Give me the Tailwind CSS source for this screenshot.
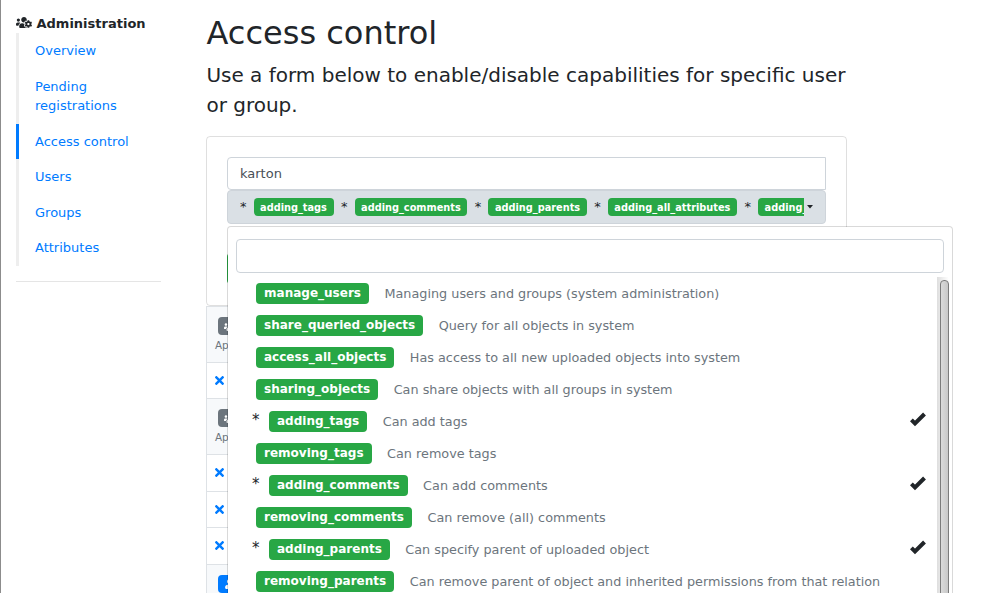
<!DOCTYPE html>
<html lang="en">
<head>
<meta charset="utf-8">
<title>Access control</title>
<script src="https://cdn.jsdelivr.net/npm/@tailwindcss/browser@4"></script>
</head>
<body class="relative flex h-[593px] w-[986px] overflow-hidden border-l border-[#8c8c8c] bg-white font-['DejaVu_Sans',sans-serif] text-[13px] leading-[19.5px] text-[#212529]">
<svg class="hidden">
  <symbol id="times" viewBox="0 0 352 512"><path fill="currentColor" d="M242.72 256l100.07-100.07c12.28-12.28 12.28-32.19 0-44.48l-22.24-22.24c-12.28-12.28-32.19-12.28-44.48 0L176 189.28 75.93 89.21c-12.28-12.28-32.19-12.28-44.48 0L9.21 111.45c-12.28 12.28-12.28 32.19 0 44.48L109.28 256 9.21 356.07c-12.28 12.28-12.28 32.19 0 44.48l22.24 22.24c12.28 12.28 32.2 12.28 44.48 0L176 322.72l100.07 100.07c12.28 12.28 32.2 12.28 44.48 0l22.24-22.24c12.28-12.28 12.28-32.19 0-44.48L242.72 256z"/></symbol>
  <symbol id="check" viewBox="0 0 16 16"><path fill="none" stroke="currentColor" stroke-width="4" d="M1.400 8.900L5 12.500L14.500 3"/></symbol>
  <symbol id="user" viewBox="0 0 448 512"><path fill="currentColor" d="M224 256c70.700 0 128-57.300 128-128S294.700 0 224 0 96 57.300 96 128s57.300 128 128 128zm89.600 32h-16.700c-22.200 10.200-46.900 16-72.900 16s-50.600-5.800-72.900-16h-16.700C60.200 288 0 348.200 0 422.400V464c0 26.500 21.500 48 48 48h352c26.500 0 48-21.500 48-48v-41.600c0-74.200-60.200-134.400-134.400-134.400z"/></symbol>
  <symbol id="users" viewBox="0 0 640 512"><path fill="currentColor" d="M96 224c35.300 0 64-28.700 64-64s-28.700-64-64-64-64 28.700-64 64 28.700 64 64 64zm448 0c35.300 0 64-28.700 64-64s-28.700-64-64-64-64 28.700-64 64 28.700 64 64 64zm32 32h-64c-17.600 0-33.500 7.100-45.100 18.600 40.300 22.100 68.900 62 75.100 109.400h66c17.700 0 32-14.300 32-32v-32c0-35.300-28.700-64-64-64zm-256 0c61.900 0 112-50.100 112-112S381.900 32 320 32 208 82.100 208 144s50.100 112 112 112zm76.800 32h-8.300c-20.800 10-43.900 16-68.500 16s-47.600-6-68.500-16h-8.300C179.600 288 128 339.600 128 403.200V432c0 26.500 21.500 48 48 48h288c26.500 0 48-21.500 48-48v-28.800c0-63.600-51.600-115.200-115.200-115.200zm-223.700-13.400C161.500 263.100 145.600 256 128 256H64c-35.300 0-64 28.700-64 64v32c0 17.700 14.300 32 32 32h65.900c6.300-47.400 34.900-87.300 75.200-109.400z"/></symbol>
</svg>

<aside class="ml-[15px] w-[145px] shrink-0 pt-[13.5px]">
  <div class="flex h-[19.500px] items-center gap-[4.500px] font-bold">
    <svg class="-mt-px h-[13px] w-[16px]" viewBox="0 0 640 512"><path fill="currentColor" d="M610.5 341.3c2.600-14.100 2.600-28.500 0-42.600l25.800-14.900c3-1.700 4.300-5.200 3.300-8.500-6.700-21.600-18.200-41.200-33.200-57.400-2.300-2.500-6-3.100-9-1.400l-25.800 14.900c-10.900-9.300-23.400-16.500-36.900-21.300v-29.800c0-3.400-2.400-6.400-5.700-7.100-22.300-5-45-4.800-66.200 0-3.300.7-5.700 3.700-5.700 7.100v29.800c-13.500 4.800-26 12-36.900 21.300l-25.800-14.900c-2.900-1.700-6.700-1.100-9 1.400-15 16.200-26.500 35.800-33.200 57.400-1 3.300.4 6.800 3.300 8.500l25.800 14.900c-2.600 14.100-2.600 28.500 0 42.600l-25.800 14.900c-3 1.700-4.300 5.200-3.300 8.500 6.700 21.600 18.200 41.100 33.200 57.400 2.300 2.500 6 3.100 9 1.400l25.800-14.900c10.900 9.300 23.400 16.500 36.900 21.300v29.800c0 3.400 2.400 6.400 5.700 7.100 22.300 5 45 4.800 66.200 0 3.300-.7 5.700-3.700 5.700-7.100v-29.800c13.500-4.800 26-12 36.900-21.300l25.800 14.900c2.900 1.700 6.700 1.100 9-1.400 15-16.200 26.500-35.800 33.200-57.400 1-3.300-.4-6.800-3.300-8.500l-25.800-14.900zM496 368.500c-26.800 0-48.500-21.800-48.500-48.500s21.800-48.500 48.500-48.500 48.500 21.800 48.500 48.500-21.700 48.500-48.500 48.500zM96 224c35.300 0 64-28.700 64-64s-28.700-64-64-64-64 28.700-64 64 28.700 64 64 64zm224 32c1.900 0 3.700-.5 5.600-.6 8.300-21.700 20.500-42.100 36.300-59.200 7.400-8 17.900-12.600 28.900-12.600 6.900 0 13.700 1.800 19.600 5.300l7.900 4.600c.8-.5 1.600-.9 2.400-1.400 7-14.600 11.200-30.800 11.200-48 0-61.900-50.100-112-112-112S208 82.100 208 144c0 61.900 50.100 112 112 112zm105.200 194.500c-2.300-1.200-4.600-2.600-6.800-3.900-8.200 4.800-15.300 9.800-27.500 9.800-10.900 0-21.400-4.600-28.900-12.600-18.300-19.800-32.300-43.900-40.200-69.600-10.700-34.500 24.900-49.700 25.800-50.300-.1-2.600-.1-5.200 0-7.800l-7.900-4.600c-3.800-2.200-7-5-9.800-8.100-3.300.2-6.500.6-9.800.6-24.600 0-47.600-6-68.500-16h-8.300C179.600 288 128 339.600 128 403.200V432c0 26.500 21.500 48 48 48h255.400c-3.700-6-6.200-12.800-6.200-20.300v-9.200zM173.100 274.600C161.500 263.100 145.600 256 128 256H64c-35.300 0-64 28.700-64 64v32c0 17.700 14.300 32 32 32h65.900c6.300-47.400 34.900-87.300 75.200-109.400z"/></svg>
    <span>Administration</span>
  </div>
  <nav class="flex flex-col text-[#007bff]">
    <a class="border-l-[3px] border-[#eee] px-4 py-2">Overview</a>
    <a class="border-l-[3px] border-[#eee] px-4 py-2">Pending<br>registrations</a>
    <a class="border-l-[3px] border-[#007bff] px-4 py-2">Access control</a>
    <a class="border-l-[3px] border-[#eee] px-4 py-2">Users</a>
    <a class="border-l-[3px] border-[#eee] px-4 py-2">Groups</a>
    <a class="border-l-[3px] border-[#eee] px-4 py-2">Attributes</a>
  </nav>
  <hr class="mt-[15px] border-black/10">
</aside>

<main class="ml-[45px] w-[641px] shrink-0 pt-[14px]">
  <h1 class="pl-[.5px] text-[32px] leading-[38px]">Access control</h1>
  <p class="mt-2 mb-4 pl-[.4px] text-[20px] leading-[30px]">Use a form below to enable/disable capabilities for specific user or group.</p>
  <section class="h-[170px] rounded border border-black/[.125] px-5 pt-5">
    <div class="flex h-[33px] items-center rounded-l border border-[#ced4da] px-3 text-[#495057]">karton</div>
    <div class="flex h-[34px] items-center rounded border border-[#ced4da] bg-[#dae0e5] pr-3 pl-3">
      <div class="flex w-[564px] items-center overflow-hidden text-[13px] whitespace-nowrap [&_b]:mr-[7.500px] [&_b]:ml-[7.500px] [&_b]:h-[18px] [&_b]:rounded [&_b]:bg-[#28a745] [&_b]:px-[6.600px] [&_b]:text-[9.780px] [&_b]:leading-[19px] [&_b]:text-white [&_span]:w-[6px]">
        <span>*</span><b>adding_tags</b><span>*</span><b>adding_comments</b><span>*</span><b>adding_parents</b><span>*</span><b>adding_all_attributes</b><span>*</span><b>adding_files</b>
      </div>
      <svg class="ml-[3px] h-[4px] w-[6px] shrink-0" viewBox="0 0 6 4"><path d="M0 0h6L3 3.500z" fill="#212529"/></svg>
    </div>
    <div class="mt-[29px] h-[31px] w-20 rounded bg-[#28a745]"></div>
  </section>
  <section class="border border-[#dee2e6] text-[#007bff]">
    <div class="h-[56px] border-b border-[#dee2e6] bg-[#f7f9fb] pt-[10px] pl-[11px]">
      <div class="flex h-[18px] w-20 items-center rounded bg-[#6c757d] pl-[6px] text-white"><svg class="h-[11px] w-[13px]"><use href="#users"/></svg></div>
      <div class="mt-px -ml-[3px] text-[10.400px] text-[#6c757d]">Applied to group</div>
    </div>
    <div class="flex h-[36px] items-center border-b border-[#dee2e6] pl-2"><svg class="h-[13px] w-[9px]"><use href="#times"/></svg></div>
    <div class="h-[56px] border-b border-[#dee2e6] bg-[#f7f9fb] pt-[10px] pl-[11px]">
      <div class="flex h-[18px] w-20 items-center rounded bg-[#6c757d] pl-[6px] text-white"><svg class="h-[11px] w-[13px]"><use href="#users"/></svg></div>
      <div class="mt-px -ml-[3px] text-[10.400px] text-[#6c757d]">Applied to group</div>
    </div>
    <div class="flex h-[37px] items-center border-b border-[#dee2e6] pb-px pl-2"><svg class="h-[13px] w-[9px]"><use href="#times"/></svg></div>
    <div class="flex h-[36px] items-center border-b border-[#dee2e6] pl-2"><svg class="h-[13px] w-[9px]"><use href="#times"/></svg></div>
    <div class="flex h-[37px] items-center border-b border-[#dee2e6] pb-px pl-2"><svg class="h-[13px] w-[9px]"><use href="#times"/></svg></div>
    <div class="h-[56px] bg-[#f7f9fb] pt-[10px] pl-[11px]">
      <div class="flex h-[18px] w-20 items-center rounded bg-[#007bff] pl-[6.500px] text-white"><svg class="h-[10px] w-[9px]"><use href="#user"/></svg></div>
    </div>
  </section>
</main>

<!-- Capability picker -->
<div class="absolute top-[226px] left-[226px] flex h-[367px] w-[726px] flex-col overflow-hidden rounded-t border border-b-0 border-black/15 bg-white bg-clip-padding pt-3">
  <div class="mx-2 h-[34px] shrink-0 rounded border border-[#ced4da]"></div>
  <div class="mt-1 flex min-h-0 flex-1">
    <ul class="w-[709px] pt-[.5px] pl-7 text-[12.800px] text-[#6c757d] [&_b]:mr-[15.500px] [&_b]:h-[21px] [&_b]:rounded [&_b]:bg-[#28a745] [&_b]:px-2 [&_b]:text-[12.020px] [&_b]:leading-[21px] [&_b]:text-white [&_i]:-ml-1 [&_i]:w-[17px] [&_i]:text-[15px] [&_i]:text-[#212529] [&_i]:not-italic [&_i]:-mt-[3px] [&_li]:flex [&_li]:h-8 [&_li]:items-center [&_li]:leading-[20px] [&_svg]:-mt-[5px] [&_svg]:mr-[11px] [&_svg]:ml-auto [&_svg]:size-4 [&_svg]:text-[#212529]">
      <li><b>manage_users</b>Managing users and groups (system administration)</li>
      <li><b>share_queried_objects</b>Query for all objects in system</li>
      <li><b>access_all_objects</b>Has access to all new uploaded objects into system</li>
      <li><b>sharing_objects</b>Can share objects with all groups in system</li>
      <li><i>*</i><b>adding_tags</b>Can add tags<svg><use href="#check"/></svg></li>
      <li><b>removing_tags</b>Can remove tags</li>
      <li><i>*</i><b>adding_comments</b>Can add comments<svg><use href="#check"/></svg></li>
      <li><b>removing_comments</b>Can remove (all) comments</li>
      <li><i>*</i><b>adding_parents</b>Can specify parent of uploaded object<svg><use href="#check"/></svg></li>
      <li><b>removing_parents</b>Can remove parent of object and inherited permissions from that relation</li>
    </ul>
    <div class="w-[13px] overflow-hidden bg-linear-to-r from-[#dedede] to-white to-90% pt-[3px] pl-[3px]">
      <div class="h-[350px] w-[9px] rounded-t-[4px] border border-[#7b7b7b] bg-linear-to-r from-[#dadada] to-[#c8c8c8]"></div>
    </div>
  </div>
</div>
</body>
</html>
